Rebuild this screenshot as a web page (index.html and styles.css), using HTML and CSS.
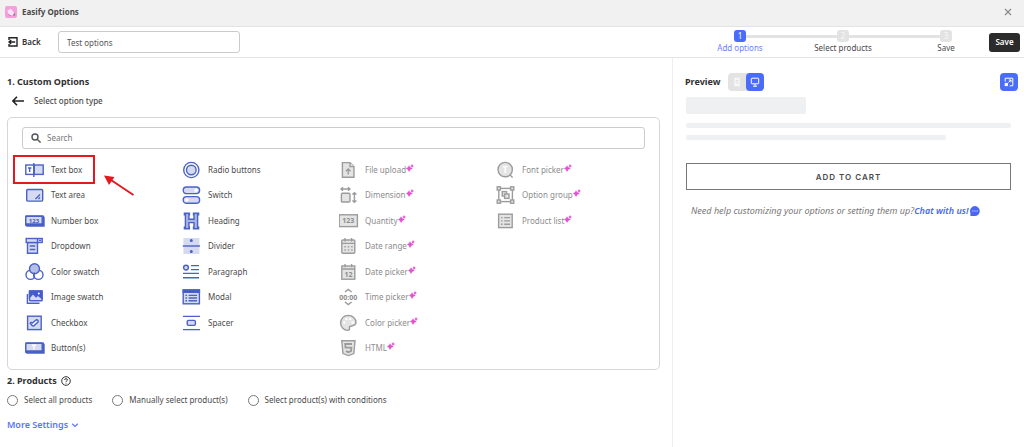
FILE: index.html
```html
<!DOCTYPE html>
<html lang="en">
<head>
    <meta charset="UTF-8">
    <meta name="viewport" content="width=device-width, initial-scale=1.0">
    <title>Easify Options</title>
    <link rel="stylesheet" href="styles.css">
</head>
<body>

    <!-- Shared shapes -->
    <svg class="defs" aria-hidden="true">
        <symbol id="sparkle" viewBox="0 0 8 8">
            <path d="M3 1.2 Q3.6 3.8 6.8 4.6 Q3.8 5.3 3 8 Q2.2 5.3 0 4.6 Q2.4 3.8 3 1.2Z"/>
            <path d="M6 0 Q6.3 1.4 8 2 Q6.3 2.5 6 4 Q5.5 2.5 4.4 2 Q5.6 1.4 6 0Z"/>
        </symbol>
    </svg>

    <header class="titlebar">
        <svg class="app-logo" viewBox="0 0 12 12" aria-hidden="true">
            <rect width="12" height="12" rx="2" fill="#f3a0dc"/>
            <path d="M2.5 4.2 L6 2.8 L9.5 7.5 L8 9.6 L4.6 9 Q2.4 7 2.5 4.2Z" fill="#fbe3f5"/>
            <path d="M7.4 9.4 L9.8 6.4 L10.2 9.8Z" fill="#8d7f93"/>
            <path d="M3 8.6 L6 9.8" stroke="#d77fc2" stroke-width="1"/>
        </svg>
        <h1>Easify Options</h1>
        <button class="close" type="button" aria-label="Close">
            <svg viewBox="0 0 8 8"><path d="M1 1 L7 7 M7 1 L1 7" stroke="#8a8a8a" stroke-width="1.2"/></svg>
        </button>
    </header>

    <div class="toolbar">
        <button class="back" type="button">
            <svg viewBox="0 0 10 10" fill="none" stroke="#222" stroke-width="1.4"><path d="M1 3 V.8 H9 V9 H1 V7"/><path d="M7.2 5 H1.2 M3.2 3 L1 5 L3.2 7"/></svg>
            Back
        </button>
        <input class="set-name" type="text" value="Test options" aria-label="Option set name">
        <ol class="steps">
            <li class="active"><span class="num">1</span><span>Add options</span></li>
            <li><span class="num">2</span><span>Select products</span></li>
            <li><span class="num">3</span><span>Save</span></li>
        </ol>
        <button class="save" type="button">Save</button>
    </div>

    <main class="layout">
        <section class="editor">
            <h2>1. Custom Options</h2>
            <div class="subhead">
                <button type="button" aria-label="Go back">
                    <svg viewBox="0 0 12 10" fill="none" stroke="#222" stroke-width="1.6"><path d="M12 5 H1 M5 .8 L.9 5 L5 9.2"/></svg>
                </button>
                <h3>Select option type</h3>
            </div>

            <div class="panel">
                <label class="search">
                    <svg viewBox="0 0 10 10" fill="none" stroke="#555" stroke-width="1.4"><circle cx="4" cy="4" r="3"/><path d="M6.2 6.2 L9.6 9.6"/></svg>
                    <input type="search" placeholder="Search" aria-label="Search">
                </label>

                <div class="types">
                    <ul>
                        <li class="marked">
                            <button type="button">
                                <svg class="icon" viewBox="0 0 20 18"><rect x=".8" y="4" width="8" height="9.4" fill="#fff"/><rect x="9.2" y="4" width="9" height="9.4"/><path d="M8.8 2 V16 M3 7 H6.4 M4.7 7 V11"/></svg>
                                Text box
                            </button>
                            <svg class="pointer" viewBox="0 0 30 22" aria-hidden="true"><path d="M29.5 20 L7 5" stroke="#e3191f" stroke-width="2"/><path d="M0 .5 L10.5 2 L5 10Z" fill="#e3191f"/></svg>
                        </li>
                        <li><button type="button">
                            <svg class="icon" viewBox="0 0 20 18"><rect x="1.7" y="3.5" width="16" height="11.6" rx="1"/><path d="M15 8.5 L10.5 13 M15 11.5 L13.5 13"/></svg>
                            Text area
                        </button></li>
                        <li><button type="button">
                            <svg class="icon" viewBox="0 0 20 18"><path class="solid" d="M1 4 H18 L19 5.5 V14 H2 L0 12.5Z"/><rect x=".8" y="4.4" width="16.4" height="7.6" rx="1"/><text x="9" y="10.6" font-size="6">123</text></svg>
                            Number box
                        </button></li>
                        <li><button type="button">
                            <svg class="icon" viewBox="0 0 20 18"><path d="M2.5 5.5 H12.5 V16.2 H2.5Z"/><rect x="1.2" y="1.5" width="16" height="4"/><path d="M12.5 1.5 V5.5 M4.7 9 H10.3 M4.7 12.5 H10.3 M14 3.4 H16"/></svg>
                            Dropdown
                        </button></li>
                        <li><button type="button">
                            <svg class="icon" viewBox="0 0 20 18"><circle cx="5.6" cy="11.8" r="4.6" fill="#fff"/><circle cx="13.4" cy="11.8" r="4.6" fill="#fff"/><circle cx="9.5" cy="5.8" r="5" fill="#b5bfe6"/><path d="M9.5 9.5 Q7.8 12.5 9.7 15" fill="none"/></svg>
                            Color swatch
                        </button></li>
                        <li><button type="button">
                            <svg class="icon" viewBox="0 0 20 18"><path d="M2.4 6 V15.2 H14.5" fill="none"/><rect x="4.5" y="3" width="12.6" height="9.8" rx=".6"/><path class="solid" d="M4.5 9.5 L8 5.6 L11 8.8 L13 7.2 L17 10.5 V3 H4.5Z"/><circle cx="13.8" cy="5.4" r="1" fill="#fff" stroke="none"/></svg>
                            Image swatch
                        </button></li>
                        <li><button type="button">
                            <svg class="icon" viewBox="0 0 20 18"><rect x="2.6" y="2.2" width="13.6" height="13.4"/><path d="M5.2 9.2 Q6.2 7.8 7.4 9 L11.4 5.8 Q13.8 5.8 13 8 L8.6 12 Q7 12.4 5.2 9.2Z" fill="#fff"/></svg>
                            Checkbox
                        </button></li>
                        <li><button type="button">
                            <svg class="icon" viewBox="0 0 20 18"><path class="solid" d="M1 4 H18 L19 5.5 V14 H2 L0 12.5Z"/><rect x=".8" y="4.4" width="16.4" height="7.6" rx="1"/><path d="M7 6.3 H11 M9 6.3 V10.4" stroke="#fff"/></svg>
                            Button(s)
                        </button></li>
                    </ul>

                    <ul>
                        <li><button type="button">
                            <svg class="icon" viewBox="0 0 20 18"><circle cx="9.3" cy="9" r="7.6" fill="#fff"/><circle cx="9.3" cy="9" r="4.8"/></svg>
                            Radio buttons
                        </button></li>
                        <li><button type="button">
                            <svg class="icon" viewBox="0 0 20 18"><rect x="1.2" y="1" width="16.4" height="6.6" rx="3.3"/><circle cx="14" cy="4.3" r="1.7" fill="#fff" stroke="none"/><rect x="1.2" y="10.6" width="16.4" height="6.6" rx="3.3"/><circle cx="4.8" cy="13.9" r="1.7" fill="#fff" stroke="none"/></svg>
                            Switch
                        </button></li>
                        <li><button type="button">
                            <svg class="icon" viewBox="0 0 20 18"><path d="M2.4 1.2 H7.4 V2.8 H6.9 V7.2 H12 V2.8 H11.5 V1.2 H16.6 V2.8 H15.6 V15.2 H16.6 V16.8 H11.5 V15.2 H12 V10.6 H6.9 V15.2 H7.4 V16.8 H2.4 V15.2 H3.4 V2.8 H2.4Z" fill="#a9b5e3"/></svg>
                            Heading
                        </button></li>
                        <li><button type="button">
                            <svg class="icon" viewBox="0 0 20 18"><rect x="1.4" y="1" width="16" height="16" stroke="none"/><path d="M.8 9 H18" /><circle class="solid" cx="9.3" cy="3.4" r=".8"/><circle class="solid" cx="9.3" cy="14.6" r=".8"/></svg>
                            Divider
                        </button></li>
                        <li><button type="button">
                            <svg class="icon" viewBox="0 0 20 18"><circle cx="4" cy="4.6" r="2.4"/><path d="M9 2.6 H17 M9 6.6 H17 M1 10.4 H17 M1 14.8 H17"/></svg>
                            Paragraph
                        </button></li>
                        <li><button type="button">
                            <svg class="icon" viewBox="0 0 20 18"><rect x="1.2" y="2" width="16.2" height="13.8"/><path class="solid" d="M1.2 2 H17.4 V4.4 H1.2Z"/><path d="M3.4 7.4 H5 M3.4 10 H5 M3.4 12.8 H5 M6.6 7.4 H15 M6.6 10 H15 M6.6 12.8 H15"/></svg>
                            Modal
                        </button></li>
                        <li><button type="button">
                            <svg class="icon" viewBox="0 0 20 18"><path d="M1 2.4 H18 M1 15.6 H18"/><rect x="5.2" y="6.4" width="8.2" height="5" rx="1.4"/></svg>
                            Spacer
                        </button></li>
                    </ul>

                    <ul class="pro">
                        <li><button type="button">
                            <svg class="icon" viewBox="0 0 20 18"><path d="M3.4 1.6 H11 L15 5.6 V16.2 H3.4Z"/><path d="M11 1.6 V5.6 H15 M9.2 13.5 V8 M6.8 10.2 L9.2 8 L11.6 10.2"/></svg>
                            <span>File upload<svg class="spark"><use href="#sparkle"/></svg></span>
                        </button></li>
                        <li><button type="button">
                            <svg class="icon" viewBox="0 0 20 18"><rect x="2.4" y="7.2" width="8.6" height="8.8" rx="1"/><path d="M2 3 H11 M4 1.2 L2 3 L4 4.8 M9 1.2 L11 3 L9 4.8 M15.4 7 V16 M13.4 8.6 L15.4 6.8 L17.4 8.6 M13.4 14.4 L15.4 16.2 L17.4 14.4" fill="none"/></svg>
                            <span>Dimension<svg class="spark"><use href="#sparkle"/></svg></span>
                        </button></li>
                        <li><button type="button">
                            <svg class="icon" viewBox="0 0 20 18"><rect x=".2" y="2.8" width="18.2" height="11.8"/><text x="9.3" y="11.4" font-size="7">123</text></svg>
                            <span>Quantity<svg class="spark"><use href="#sparkle"/></svg></span>
                        </button></li>
                        <li><button type="button">
                            <svg class="icon" viewBox="0 0 20 18"><rect x="2.8" y="3" width="13" height="13.2" rx="1"/><path d="M2.8 6.4 H15.8 M6 1 V4.4 M12.6 1 V4.4"/><path d="M5.4 9.8 H14 M5.4 13 H14" stroke-dasharray="1.4 2"/></svg>
                            <span>Date range<svg class="spark"><use href="#sparkle"/></svg></span>
                        </button></li>
                        <li><button type="button">
                            <svg class="icon" viewBox="0 0 20 18"><rect x="2.8" y="3" width="13" height="13.2"/><path d="M2.8 6 H15.8 M6 1 V4.2 M12.6 1 V4.2"/><text x="9.4" y="14" font-size="7">12</text></svg>
                            <span>Date picker<svg class="spark"><use href="#sparkle"/></svg></span>
                        </button></li>
                        <li><button type="button">
                            <svg class="icon" viewBox="0 0 20 18"><path d="M6 4 L9.3 1.4 L12.6 4 M6 14 L9.3 16.6 L12.6 14" fill="none"/><text x="9.3" y="11.6" font-size="7">00:00</text></svg>
                            <span>Time picker<svg class="spark"><use href="#sparkle"/></svg></span>
                        </button></li>
                        <li><button type="button">
                            <svg class="icon" viewBox="0 0 20 18"><path d="M9.3 1.4 C4.6 1.4 1.6 4.8 1.6 9 C1.6 13.2 5 16.4 8.8 16.4 C11.4 16.4 10.2 14 10.4 13 C10.8 11.2 17 13.2 17 8.6 C17 4.4 13.6 1.4 9.3 1.4Z"/><g fill="#fff" stroke="none"><circle cx="5.2" cy="8.6" r="1.2"/><circle cx="7.4" cy="5" r="1.2"/><circle cx="11.2" cy="5" r="1.2"/><circle cx="13.6" cy="8.4" r="1.2"/></g></svg>
                            <span>Color picker<svg class="spark"><use href="#sparkle"/></svg></span>
                        </button></li>
                        <li><button type="button">
                            <svg class="icon" viewBox="0 0 20 18"><path d="M2.8 1.8 H16 L14.8 14.6 L9.4 16.6 L4 14.6Z"/><path d="M13 5 H6.2 L6.5 8.6 H12.4 L12 12.2 L9.4 13.2 L6.8 12.2" fill="none" stroke-width="1.8"/></svg>
                            <span>HTML<svg class="spark"><use href="#sparkle"/></svg></span>
                        </button></li>
                    </ul>

                    <ul class="pro">
                        <li><button type="button">
                            <svg class="icon" viewBox="0 0 20 18"><circle cx="9.2" cy="8.6" r="7.2"/><path d="M13.8 13.8 L16.6 16.6"/><path d="M6.6 5.6 H11.8 M9.2 5.6 V12" stroke="#fff"/></svg>
                            <span>Font picker<svg class="spark"><use href="#sparkle"/></svg></span>
                        </button></li>
                        <li><button type="button">
                            <svg class="icon" viewBox="0 0 20 18"><rect x="2.8" y="2.4" width="13.6" height="13.2" fill="#fff"/><rect x="1.2" y=".8" width="3.2" height="3.2"/><rect x="14.6" y=".8" width="3.2" height="3.2"/><rect x="1.2" y="14" width="3.2" height="3.2"/><rect x="14.6" y="14" width="3.2" height="3.2"/><rect x="6.2" y="5.6" width="4.4" height="4.4"/><rect x="8.6" y="8" width="4.4" height="4.4"/></svg>
                            <span>Option group<svg class="spark"><use href="#sparkle"/></svg></span>
                        </button></li>
                        <li><button type="button">
                            <svg class="icon" viewBox="0 0 20 18"><rect x="2.6" y="2.2" width="13.6" height="13.4"/><path d="M5 5.6 H6.6 M5 8.9 H6.6 M5 12.2 H6.6 M8.2 5.6 H14 M8.2 8.9 H14 M8.2 12.2 H14"/></svg>
                            <span>Product list<svg class="spark"><use href="#sparkle"/></svg></span>
                        </button></li>
                    </ul>
                </div>
            </div>

            <h2 class="products-title">2. Products
                <svg viewBox="0 0 10 10" fill="none" stroke="#333"><circle cx="5" cy="5" r="4.3"/><path d="M3.6 4 Q3.7 2.7 5 2.7 Q6.4 2.7 6.4 3.9 Q6.4 4.6 5.6 5 Q5 5.3 5 6 M5 6.8 V7.6"/></svg>
            </h2>
            <div class="radios">
                <label><input type="radio" name="products"> Select all products</label>
                <label><input type="radio" name="products"> Manually select product(s)</label>
                <label><input type="radio" name="products"> Select product(s) with conditions</label>
            </div>
            <button class="more" type="button">More Settings
                <svg viewBox="0 0 8 8" fill="none" stroke="#5b74fb" stroke-width="1.2"><path d="M1.2 2.8 L4 5.4 L6.8 2.8"/></svg>
            </button>
        </section>

        <section class="preview">
            <div class="preview-head">
                <h2>Preview</h2>
                <div class="devices">
                    <button type="button" aria-label="Mobile"><svg viewBox="0 0 10 10"><rect x="2.2" y=".8" width="5.6" height="8.4" rx=".8" fill="#f6f6f6"/><path d="M3.6 3.6 H6.4 M3.6 5.8 H6.4" stroke="#dcdcdc"/></svg></button>
                    <button class="on" type="button" aria-label="Desktop"><svg viewBox="0 0 10 10" fill="none" stroke="#fff"><rect x="1.3" y="1.2" width="7.4" height="5.6" rx=".6"/><path d="M5 7 V9 M3 9.2 H7"/></svg></button>
                </div>
                <button class="expand" type="button" aria-label="Expand">
                    <svg viewBox="0 0 10 10" fill="none" stroke="#fff"><path d="M1.2 4.6 V1.2 H8.8 V8.8 H5.6"/><path d="M4.4 5.4 L7 3 M4.8 3 H7 V5.2"/><rect x="1.2" y="6.4" width="2.2" height="2.2" fill="#fff"/></svg>
                </button>
            </div>
            <div class="bone bone-title"></div>
            <div class="bone"></div>
            <div class="bone bone-short"></div>
            <button class="cart" type="button">ADD TO CART</button>
            <p class="help">Need help customizing your options or setting them up?<a href="#">Chat with us!<svg viewBox="0 0 10 10"><path d="M5 0 A5 5 0 1 1 4.5 10 H.4 V6.8 A5 5 0 0 1 5 0Z" fill="#4a66f5"/><path d="M2.4 5 H3.4 M4.5 5 H5.5 M6.6 5 H7.6" stroke="#fff"/></svg></a></p>
        </section>
    </main>

</body>
</html>
```
FILE: styles.css
```css
*, *::before {
    box-sizing: border-box;
}

body {
    margin: 0;
    font-family: "Noto Sans", "Open Sans", sans-serif;
    font-size: 8px;
    line-height: 12px;
    color: #4a4a4a;
    background: #fff;
}

h1, h2, h3, p, ul, ol {
    margin: 0;
    padding: 0;
}

ul, ol {
    list-style: none;
}

h2 {
    font-size: 9px;
    font-weight: 700;
    color: #303030;
}

button, input {
    font: inherit;
    color: inherit;
}

button {
    display: flex;
    align-items: center;
    padding: 0;
    border: none;
    background: none;
    cursor: pointer;
}

svg {
    flex: none;
}

.defs {
    position: absolute;
    width: 0;
    height: 0;
}

/* Top bars */
.titlebar {
    display: flex;
    align-items: center;
    gap: 5px;
    height: 27px;
    padding: 0 12px 2px 5px;
    background: #f1f1f1;
    border-bottom: 1px solid #e3e3e3;
}

.titlebar h1 {
    font-size: 8px;
    font-weight: 700;
}

.app-logo {
    width: 12px;
    height: 12px;
}

.close {
    margin-left: auto;
}

.close svg {
    width: 8px;
    height: 8px;
}

.toolbar {
    display: flex;
    align-items: center;
    height: 31px;
    padding: 0 4px 0 8px;
    border-bottom: 1px solid #e3e3e3;
}

.back {
    gap: 4px;
    width: 50px;
    font-weight: 600;
    color: #303030;
}

.back svg {
    width: 10px;
    height: 10px;
}

.set-name {
    width: 182px;
    height: 22px;
    padding: 0 8px;
    border: 1px solid #c9cccf;
    border-radius: 3px;
    color: #555;
}

.steps {
    display: flex;
    gap: 43px;
    margin: 0 13px 0 auto;
}

.steps li {
    position: relative;
    display: flex;
    flex-direction: column;
    align-items: center;
    width: 60px;
    white-space: nowrap;
}

/* Line back to the previous step */
.steps li + li::before {
    content: "";
    position: absolute;
    top: 5px;
    right: 36px;
    width: 91px;
    height: 3px;
    background: #e3e3e3;
}

.num {
    width: 12px;
    height: 12px;
    border-radius: 3px;
    background: #e3e3e3;
    color: #f8f8f8;
    text-align: center;
}

.active {
    color: #6b80fa;
}

.active .num {
    background: #4a6cfa;
    color: #fff;
}

.save {
    justify-content: center;
    width: 31px;
    height: 19px;
    border-radius: 3px;
    background: #2b2b2b;
    color: #fff;
    font-weight: 600;
}

/* Main area */
.layout {
    display: grid;
    grid-template-columns: minmax(0, 21fr) minmax(0, 11fr);
    min-height: 389px;
}

.editor {
    padding: 18px 12px 0 7px;
}

.subhead {
    display: flex;
    align-items: center;
    gap: 10px;
    margin: 7px 0 10px 5px;
}

.subhead svg {
    width: 12px;
    height: 10px;
}

.subhead h3 {
    font-size: 8px;
    font-weight: 500;
}

.panel {
    padding: 9px 6px 8px 17px;
    border: 1px solid #d6d6d6;
    border-radius: 5px;
}

.search {
    display: flex;
    align-items: center;
    gap: 6px;
    height: 22px;
    margin: 0 8px 0 -3px;
    padding: 0 8px;
    border: 1px solid #ccc;
    border-radius: 3px;
}

.search svg {
    width: 10px;
    height: 10px;
}

.search input {
    flex: 1;
    padding: 0;
    border: none;
    outline: none;
    background: none;
}

.search input::placeholder {
    color: #777;
}

.types {
    display: grid;
    grid-template-columns: repeat(4, 1fr);
    min-height: 204px;
    margin-top: 8px;
}

.types ul {
    display: grid;
    grid-template-rows: repeat(8, 1fr);
}

.types li {
    position: relative;
    display: flex;
    align-items: center;
}

.types button {
    gap: 6px;
    white-space: nowrap;
}

.icon {
    width: 20px;
    height: 18px;
    fill: #d5daf1;
    stroke: #4a62c8;
    stroke-width: 1.4;
}

.icon .solid {
    fill: #4059c4;
}

.icon text {
    fill: #4059c4;
    stroke: none;
    font-weight: 700;
    text-anchor: middle;
}

.pro {
    color: #8c8c8c;
}

.pro .icon {
    fill: #e4e4e4;
    stroke: #9c9c9c;
}

.pro .icon text {
    fill: #8c8c8c;
}

.pro span {
    display: flex;
}

.spark {
    width: 8px;
    height: 8px;
    fill: #e254d3;
}

.marked::before {
    content: "";
    position: absolute;
    inset: -2px auto -1px -12px;
    width: 82px;
    border: 2px solid #e3191f;
    pointer-events: none;
}

.pointer {
    position: absolute;
    left: 79px;
    top: 18px;
    width: 30px;
    height: 22px;
}

.products-title {
    display: flex;
    align-items: center;
    gap: 4px;
    margin-top: 5px;
}

.products-title svg {
    width: 10px;
    height: 10px;
}

.radios {
    display: flex;
    gap: 20px;
    margin-top: 7px;
}

.radios label {
    display: flex;
    align-items: center;
    gap: 6px;
}

.radios input {
    appearance: none;
    width: 11px;
    height: 11px;
    margin: 0;
    border: 1px solid #777;
    border-radius: 50%;
}

.radios input:checked {
    border: 3px solid #4a66f5;
}

.more {
    gap: 3px;
    margin-top: 13px;
    font-size: 9px;
    font-weight: 600;
    color: #5b74fb;
}

.more svg {
    width: 8px;
    height: 8px;
}

/* Preview */
.preview {
    padding: 15px 13px 0;
    border-left: 1px solid #eee;
}

.preview-head {
    display: flex;
    align-items: center;
    margin: 0 -7px 6px -1px;
}

.devices {
    display: flex;
    margin-left: 8px;
    border-radius: 4px;
    background: #e3e3e3;
}

.devices button, .expand {
    justify-content: center;
    width: 18px;
    height: 18px;
    border-radius: 4px;
}

.devices .on, .expand {
    background: #4a6cfa;
}

.expand {
    margin-left: auto;
}

.preview-head svg {
    width: 10px;
    height: 10px;
}

.bone {
    height: 5px;
    margin-bottom: 7px;
    border-radius: 2px;
    background: #eff0f2;
}

.bone-title {
    width: 37%;
    height: 17px;
    margin-bottom: 9px;
}

.bone-short {
    width: 80%;
}

.cart {
    justify-content: center;
    width: 100%;
    height: 27px;
    margin-top: 23px;
    border: 1px solid #777;
    font-family: Inter, "Liberation Sans", sans-serif;
    font-size: 8px;
    font-weight: 600;
    letter-spacing: 1px;
}

.help {
    display: flex;
    align-items: center;
    margin: 15px 0 0 5px;
    font-size: 9px;
    font-style: italic;
    color: #777;
    white-space: nowrap;
}

.help a {
    display: flex;
    align-items: center;
    gap: 2px;
    font-weight: 600;
    color: #4a66f5;
    text-decoration: none;
}

.help svg {
    width: 10px;
    height: 10px;
}
```
